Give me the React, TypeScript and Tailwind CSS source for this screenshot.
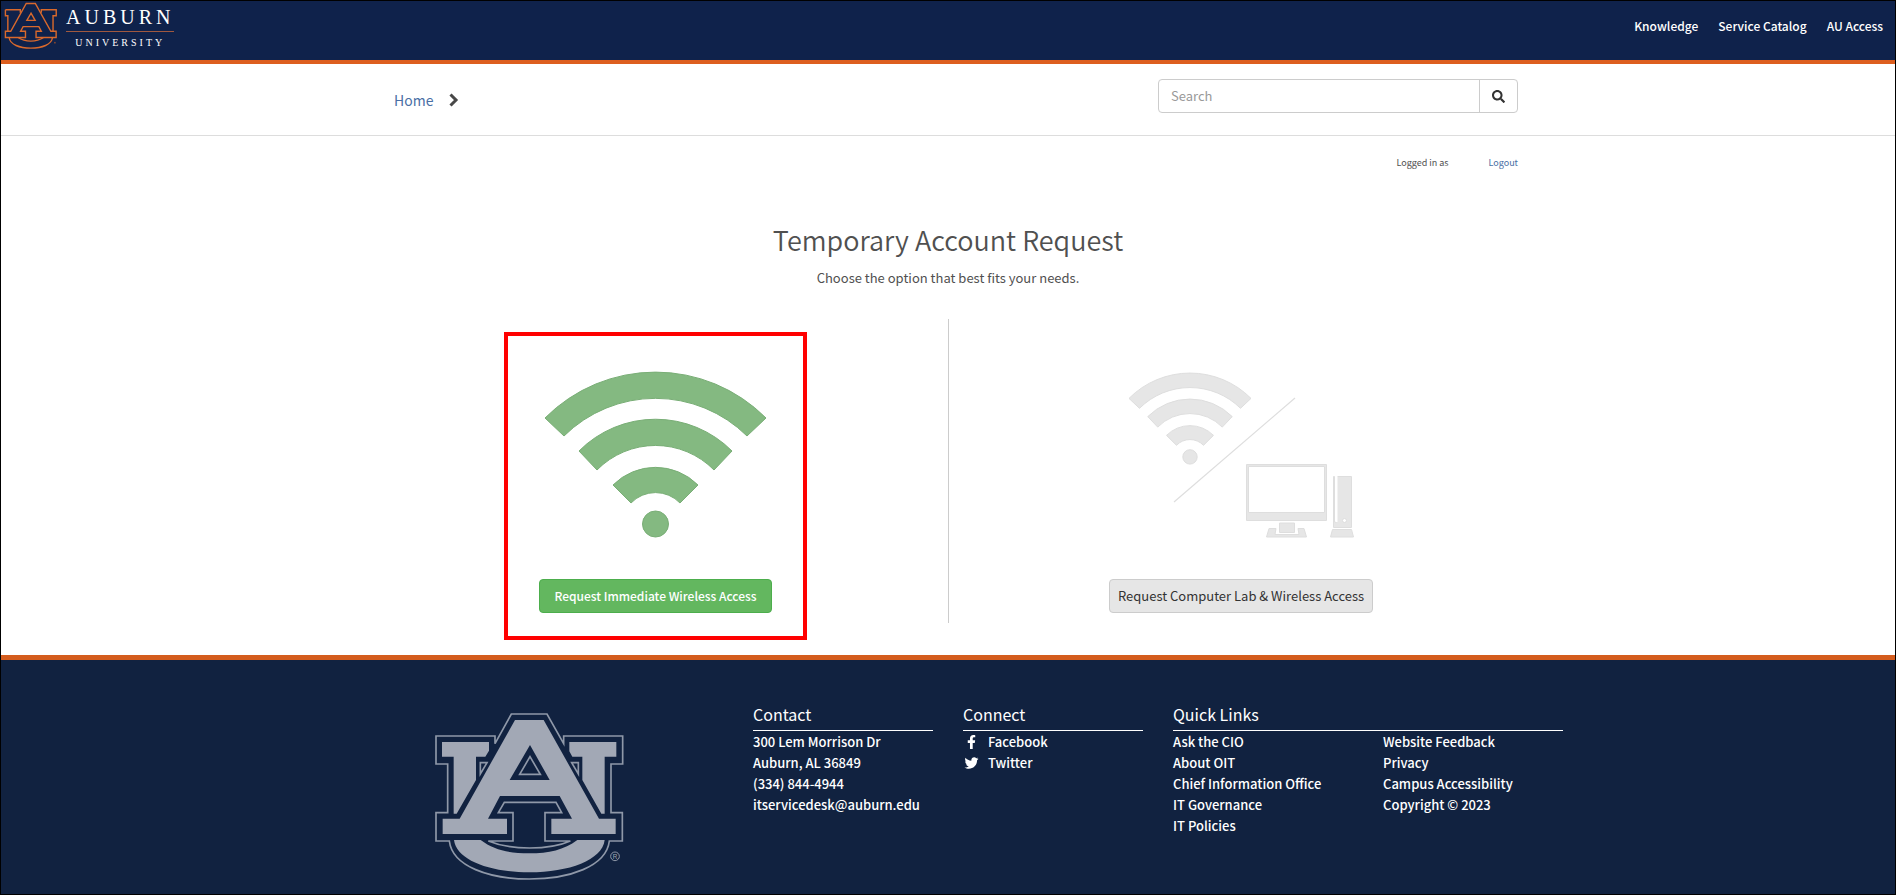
import React from "react";
import { FaFacebookF, FaSearch, FaTwitter } from "react-icons/fa";

const A_SHAPE =
  "M288 240H374L540 536H590V582H397V536H459L422 468H243L207 536H264V582H71V536H122ZM333 315L272 420H392Z";
const U_LEFT = "M69 306H210V332L199 350H171V420L113 521H104V350H69Z";
const U_RIGHT = "M451 306H592V350H557V521H547L490 420V350H460L451 334Z";
const BOWL =
  "M105 600H185C225 630 270 640 330 640C390 640 435 630 475 600H557C550 660 450 697 331 697C212 697 112 660 105 600Z";
const OUTLINE =
  "M277 222H384L434 311V288H611V372H576V518H610V603H571C562 680 450 717 331 717C212 717 100 680 91 603H51V518H86V372H51V288H228V311Z";
const NOTCH =
  "M282 603V518H238L256 487H411L428 518H378V603H454C420 618 380 624 332 624C284 624 244 618 208 603Z";

function FooterMark() {
  return (
    <svg viewBox="45 216 576 510" className="h-[170px] w-48" role="img" aria-label="Auburn University">
      <g fill="none" stroke="#8f98a8" strokeWidth="5">
        <path d={OUTLINE} />
        <path d={NOTCH} />
        <path d="M333 350L364 403H302Z" />
        <path d="M184 368H204L184 402Z" />
        <path d="M478 368H458L478 402Z" />
        <circle cx="588" cy="649" r="13" strokeWidth="3" />
      </g>
      <g fill="#a2a8b5" fillRule="evenodd">
        <path d={BOWL} />
        <path d={U_LEFT} />
        <path d={U_RIGHT} />
        <path d={A_SHAPE} />
      </g>
      <text x="588" y="656" textAnchor="middle" fontSize="19" fill="#a2a8b5" fontFamily="Liberation Sans, sans-serif">
        R
      </text>
    </svg>
  );
}

function HeaderMark() {
  return (
    <svg viewBox="45 216 576 510" className="h-12 w-[54px]" aria-hidden="true">
      <g fill="none" stroke="#d9692c" strokeWidth="15">
        <path d="M60 297H219V330M86 527V362H60V297M443 330V297H602V362H568V527M100 594C108 670 212 707 331 707C450 707 554 670 562 594M195 594C240 625 280 632 331 632C382 632 422 625 467 594" />
        <path
          fill="#0f224b"
          d="M282 231H379L545 527H601V593H387V527H443L417 478H249L222 527H274V593H60V527H117ZM333 335L289 411H377Z"
        />
      </g>
      <circle cx="588" cy="649" r="9" fill="#8a4a33" />
    </svg>
  );
}

const WIFI_ARCS =
  "M0 46A156 156 0 0 1 221 46L202 64A130 130 0 0 0 19 64ZM34 79A108 108 0 0 1 187 79L169 98A82 82 0 0 0 52 98ZM68 113A60 60 0 0 1 153 113L135 131A34 34 0 0 0 86 131Z";

function WifiGlyph() {
  return (
    <>
      <path d={WIFI_ARCS} vectorEffect="non-scaling-stroke" />
      <circle cx="110.500" cy="152" r="13" vectorEffect="non-scaling-stroke" />
    </>
  );
}

function WifiPicture() {
  return (
    <svg viewBox="-1 -1 223 167" className="h-[167px] w-[223px]" fill="#84b981" stroke="#79ae76" aria-hidden="true">
      <WifiGlyph />
    </svg>
  );
}

function LabPicture() {
  return (
    <svg viewBox="0 0 226 167" className="h-[167px] w-[226px]" fill="#e6e6e6" stroke="#dedede" aria-hidden="true">
      <g transform="translate(1 2) scale(0.552)">
        <WifiGlyph />
      </g>
      <path d="M46 131L167 27" strokeWidth="1.200" />
      <path fillRule="evenodd" d="M118.500 93.500H198.500V149.500H118.500ZM120.500 95.500V141.500H196.500V95.500Z" />
      <path d="M151.500 152H166.500V161.500H151.500Z" />
      <path d="M141 157.500H148L147 163.500H171L170 157.500H176L178.500 166H138.500Z" />
      <path d="M205.500 105.500H206.500V151H208.500V105.500H223.500V156.500H205.500Z" />
      <path d="M208.500 105V151" stroke="#fff" strokeWidth="2" />
      <circle cx="216.500" cy="149.500" r="2" fill="#fff" />
      <path d="M204.500 158.500H223.500L225.500 166H202.500Z" />
    </svg>
  );
}

function FooterHeading({ children }: { children: React.ReactNode }) {
  return <h2 className="border-b border-white pb-1 text-base leading-6 font-normal">{children}</h2>;
}

function LinkList({ items }: { items: string[] }) {
  return (
    <ul className="flex-1">
      {items.map((item) => (
        <li key={item}>
          <a href="#">{item}</a>
        </li>
      ))}
    </ul>
  );
}

export default function App() {
  return (
    <div className="flex min-h-screen flex-col border border-black bg-white font-['Noto_Sans_CJK_SC','Source_Sans_Pro',sans-serif] text-[13px] leading-5 text-[#505050]">
      <header className="flex h-[63px] justify-between border-b-4 border-[#dd5f1f] bg-[#0f224b] text-white">
        <a href="#" className="flex gap-2 pt-px pl-[3px]" aria-label="Auburn University">
          <HeaderMark />
          <span className="flex flex-col items-center pt-[5px] font-['Liberation_Serif',serif]">
            <span className="border-b border-[#a0583f] pb-1 text-xl leading-5 tracking-[0.2em]">AUBURN</span>
            <span className="pt-1 text-[10px] leading-[14px] tracking-[0.3em]">UNIVERSITY</span>
          </span>
        </a>
        <nav className="flex gap-5 pt-[15px] pr-3 text-xs leading-5 font-medium">
          <a href="#">Knowledge</a>
          <a href="#">Service Catalog</a>
          <a href="#">AU Access</a>
        </nav>
      </header>

      <div className="border-b border-[#dddddd]">
        <div className="mx-auto flex h-[71px] w-full max-w-[1170px] items-start justify-between px-[15px] pt-[15px]">
          <nav className="flex items-center gap-4 pt-[11px] pl-4 text-sm leading-5" aria-label="Breadcrumb">
            <a href="#" className="text-[#4a6fa5]">
              Home
            </a>
            <svg viewBox="0 0 10 14" className="h-3.5 w-2.5" fill="none" stroke="#484848" strokeWidth="3" aria-hidden="true">
              <path d="M1.500 1.500L7 7L1.500 12.500" />
            </svg>
          </nav>
          <form className="flex h-[34px] w-[360px] rounded border border-[#cccccc]" onSubmit={(e) => e.preventDefault()}>
            <input
              type="text"
              aria-label="Search"
              placeholder="Search"
              className="min-w-0 flex-1 rounded-l px-3 outline-none placeholder:text-[#999999]"
            />
            <button type="submit" aria-label="Search" className="flex w-[38px] items-center justify-center border-l border-[#cccccc] text-[#333333]">
              <FaSearch className="size-[13px]" />
            </button>
          </form>
        </div>
      </div>

      <main className="mx-auto w-full max-w-[1170px] flex-1">
        <div className="flex justify-end gap-10 px-[15px] pt-[17px] text-[9px] leading-5">
          <span>Logged in as</span>
          <a href="#" className="text-[#4a6fa5]">
            Logout
          </a>
        </div>
        <h1 className="pt-[47px] text-center text-[27px] leading-10 font-[350]">Temporary Account Request</h1>
        <p className="pt-2 text-center">Choose the option that best fits your needs.</p>
        <div className="mt-[31px] grid grid-cols-2">
          <section className="flex h-[304px] justify-center pt-[13px]">
            <div className="flex h-[308px] w-[303px] flex-col items-center border-4 border-[#ff0000] pt-[35px]">
              <WifiPicture />
              <button type="button" className="mt-[41px] h-[34px] rounded border border-[#4cae4c] bg-[#63b75f] px-3.5 text-xs font-medium text-white">
                Request Immediate Wireless Access
              </button>
            </div>
          </section>
          <section className="flex flex-col items-center border-l border-[#cccccc] pt-[52px]">
            <LabPicture />
            <button type="button" className="mt-[41px] h-[34px] rounded border border-[#cccccc] bg-[#e6e6e6] px-2 text-[#333333]">
              Request Computer Lab &amp; Wireless Access
            </button>
          </section>
        </div>
      </main>

      <footer className="mt-8 h-[239px] border-t-[5px] border-[#d45c1d] bg-[#112240] text-white">
        <div className="mx-auto grid w-full max-w-[1260px] grid-cols-6 pt-[42px] leading-[21px] font-medium">
          <div className="col-span-2 flex justify-center pt-2.5 pl-1">
            <FooterMark />
          </div>
          <address className="px-[15px] not-italic">
            <FooterHeading>Contact</FooterHeading>
            <p>300 Lem Morrison Dr</p>
            <p>Auburn, AL 36849</p>
            <p>(334) 844-4944</p>
            <a href="#">itservicedesk@auburn.edu</a>
          </address>
          <div className="px-[15px]">
            <FooterHeading>Connect</FooterHeading>
            <a href="#" className="flex items-center gap-2">
              <FaFacebookF className="h-3.5 w-[17px]" />
              Facebook
            </a>
            <a href="#" className="flex items-center gap-2">
              <FaTwitter className="h-3.5 w-[17px]" />
              Twitter
            </a>
          </div>
          <div className="col-span-2 px-[15px]">
            <FooterHeading>Quick Links</FooterHeading>
            <div className="flex gap-[30px]">
              <LinkList items={["Ask the CIO", "About OIT", "Chief Information Office", "IT Governance", "IT Policies"]} />
              <LinkList items={["Website Feedback", "Privacy", "Campus Accessibility", "Copyright © 2023"]} />
            </div>
          </div>
        </div>
      </footer>
    </div>
  );
}
